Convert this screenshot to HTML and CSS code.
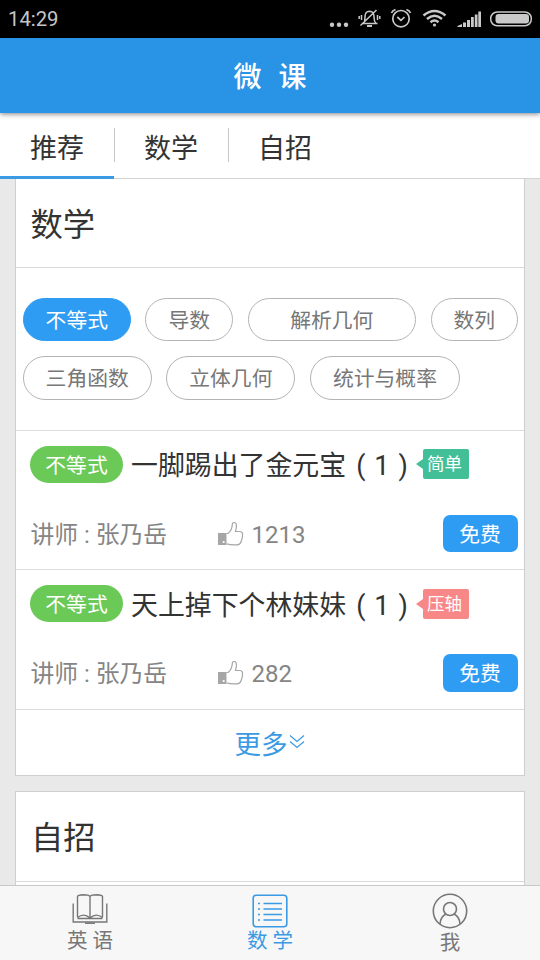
FILE: index.html
```html
<!DOCTYPE html>
<html lang="zh-CN">
<head>
<meta charset="utf-8">
<title>微课</title>
<link rel="stylesheet" href="styles.css">
</head>
<body>
<div class="app">
  <div class="status">
    <span class="time">14:29</span>
    <svg class="status-icons" width="220" height="38" viewBox="0 0 220 38" fill="none" stroke="#c9c9c9">
      <g fill="#c9c9c9" stroke="none"><circle cx="12" cy="24.7" r="2.2"/><circle cx="19" cy="24.7" r="2.2"/><circle cx="26" cy="24.7" r="2.2"/></g>
      <g stroke-width="1.5"><path d="M41.500 23.500H57.500M43.500 23.500Q45 21.500 45 17Q45 11.500 49.500 11.300Q54 11.500 54 17Q54 21.500 56 23.500M40.500 25.500L56.500 10M41.500 15v5M39.200 16v3M57.500 15v5M59.800 16v3"/><path d="M47 26h5" stroke-width="2"/></g>
      <g stroke-width="1.700"><circle cx="81" cy="18.700" r="8.200"/><path d="M77.300 17L81 20.300L84.500 17M71.500 13Q72.500 10.500 75.500 9.500M86.500 9.500Q89.500 10.500 90.500 13" /></g>
      <g stroke-width="2.500"><path d="M103.500 15.500Q114.500 6.500 125.500 15.500M107 19Q114.500 12.500 122 19M110.500 22.300Q114.500 18.800 118.500 22.300"/><circle cx="114.500" cy="25" r="1.600" fill="#c9c9c9" stroke="none"/></g>
      <g fill="#c9c9c9" stroke="none"><path d="M137.500 27v-1l4.500-2v3zM143 22.500h3V27H143zM147 20h3V27H147zM151 17h2.800V27H151zM154.800 14.500h2.700V27h-2.700zM158.300 11.500h2.700V27h-2.700z"/></g>
      <rect x="170.700" y="12" width="40.600" height="13.800" rx="6.500" stroke-width="1.500"/><rect x="175.500" y="14" width="33.500" height="9.600" rx="3" fill="#c9c9c9" stroke="none"/>
    </svg>
  </div>
  <header class="header">微 课</header>
  <nav class="tabs">
    <a class="tab tab-active">推荐</a>
    <a class="tab">数学</a>
    <a class="tab">自招</a>
  </nav>
  <main class="content">
    <section class="card card-first">
      <h2 class="card-title">数学</h2>
      <div class="chips">
        <span class="chip chip-active">不等式</span><span class="chip">导数</span><span class="chip chip-wide">解析几何</span><span class="chip">数列</span>
        <span class="chip">三角函数</span><span class="chip">立体几何</span><span class="chip">统计与概率</span>
      </div>
      <article class="lesson">
        <div class="lesson-top">
          <span class="topic">不等式</span>
          <span class="name">一脚踢出了金元宝<span class="part"><span>(</span><span>1</span><span>)</span></span></span>
          <span class="level level-easy">简单</span>
        </div>
        <div class="lesson-meta">
          <span class="teacher">讲师 : 张乃岳</span>
          <svg class="thumb" width="26" height="26" viewBox="0 0 26 26"><path d="M0 12H8.500V24H0z" fill="#a6a6a6"/><circle cx="5.700" cy="21" r="1.100" fill="#fff"/><path d="M8.500 12.500H10Q14 9.500 14.300 3.500Q14.500 1.300 16.200 1.500Q19 2 18.300 6.500L17.500 10.500H22Q25 11 24.500 14Q24.700 17 23.300 20Q22.500 23.500 19 23.900Q12 24.200 8.500 22.800" fill="none" stroke="#a6a6a6" stroke-width="1.200"/></svg>
          <span class="likes">1213</span>
          <span class="free">免费</span>
        </div>
      </article>
      <article class="lesson">
        <div class="lesson-top">
          <span class="topic">不等式</span>
          <span class="name">天上掉下个林妹妹<span class="part"><span>(</span><span>1</span><span>)</span></span></span>
          <span class="level level-hard">压轴</span>
        </div>
        <div class="lesson-meta">
          <span class="teacher">讲师 : 张乃岳</span>
          <svg class="thumb" width="26" height="26" viewBox="0 0 26 26"><path d="M0 12H8.500V24H0z" fill="#a6a6a6"/><circle cx="5.700" cy="21" r="1.100" fill="#fff"/><path d="M8.500 12.500H10Q14 9.500 14.300 3.500Q14.500 1.300 16.200 1.500Q19 2 18.300 6.500L17.500 10.500H22Q25 11 24.500 14Q24.700 17 23.300 20Q22.500 23.500 19 23.900Q12 24.200 8.500 22.800" fill="none" stroke="#a6a6a6" stroke-width="1.200"/></svg>
          <span class="likes">282</span>
          <span class="free">免费</span>
        </div>
      </article>
      <div class="more">更多<svg width="18" height="18" viewBox="0 0 18 18" fill="none" stroke="#3b9ae4" stroke-width="1.200"><path d="M2 2.500L9 8.500L16 2.500M2 8.500L9 14.500L16 8.500"/></svg></div>
    </section>
    <section class="card">
      <h2 class="card-title card-title-next">自招</h2>
    </section>
  </main>
  <footer class="bottom">
    <a class="item">
      <svg width="36" height="34" viewBox="0 0 36 34" fill="none" stroke="#777" stroke-width="1.400"><path d="M5.500 2.500Q6 1 11 .8Q17 .8 18 2.500Q19 .8 25 .8Q30 1 30.500 2.500V23.500M5.500 2.500V23.500M18 2.500V24M5.500 23.500Q12 18.500 18 24Q24 18.500 30.500 23.500M5.500 24.500H30.500M1.200 9.500V28H34.800V9.500"/><path d="M13 29.200H23" stroke-width="1.500"/></svg>
      <span>英 语</span>
    </a>
    <a class="item item-active">
      <svg width="36" height="34" viewBox="0 0 36 34" fill="none" stroke="#3b9ae4" stroke-width="1.600"><rect x="1.200" y="1.200" width="33.600" height="31.600" rx="3"/><path d="M11.500 9.500H30M11.500 15H30M11.500 20.500H30M11.500 26H30" stroke-width="1.700"/><path d="M6 9.500h2M6 15h2M6 20.500h2M6 26h2"/></svg>
      <span>数 学</span>
    </a>
    <a class="item item-me">
      <svg width="36" height="36" viewBox="0 0 36 36" fill="none" stroke="#777" stroke-width="1.600"><circle cx="18" cy="18" r="16.700"/><circle cx="18" cy="16" r="6.500"/><path d="M8 31Q8.500 23.500 14 21M22 21Q27.500 23.500 28 31"/></svg>
      <span>我</span>
    </a>
  </footer>
</div>
</body>
</html>
```

FILE: styles.css
```css
* { box-sizing: border-box; }
body { margin: 0; font-family: Roboto, "Noto Sans CJK SC", sans-serif; color: #333; }
.app { width: 540px; height: 960px; display: flex; flex-direction: column; overflow: hidden; background: #e9e9e9; }

.status { flex: none; height: 38px; background: #000; display: flex; align-items: center; justify-content: space-between; }
.time { color: #c6c6c6; font-size: 20.300px; line-height: 38px; padding-left: 8px; }
.status-icons { display: block; }

.header { flex: none; height: 75px; background: #2994e6; color: #fff; font-size: 28px; font-weight: 500; line-height: 79px; text-align: center; word-spacing: 10px; position: relative; box-shadow: 0 1px 5px rgba(0, 0, 0, .5); }

.tabs { flex: none; height: 66px; background: #fff; border-bottom: 1px solid #d2d2d2; display: flex; }
.tab { width: 114px; height: 66px; font-size: 27px; line-height: 73px; text-align: center; display: flex; justify-content: center; }
.tab::after { content: ""; width: 1px; height: 34px; margin: 15px -31px 0 30px; background: #c8c8c8; }
.tab:last-child::after { background: none; }
.tab-active { border-bottom: 3px solid #3b9ae4; }

.content { flex: 1; min-height: 0; overflow: hidden; padding: 0 15px; display: flex; flex-direction: column; gap: 15px; }
.card { flex: none; background: #fff; border: 1px solid #cfcfcf; }
.card-first { border-top: 0; height: 597px; }
.card-title { margin: 0; height: 89px; line-height: 93px; padding-left: 14.500px; font-size: 32.300px; font-weight: 400; border-bottom: 1px solid #d9d9d9; }
.card-title-next { height: 90px; line-height: 93px; padding-left: 15px; margin-bottom: 30px; }

.chips { height: 162px; padding: 29.500px 0 0 6.600px; display: flex; flex-wrap: wrap; align-content: flex-start; gap: 15px 14.500px; }
.chip { height: 43.500px; line-height: 44px; padding: 0 22px; border: 1px solid #b4b4b4; border-radius: 22px; font-size: 20.800px; color: #777; white-space: nowrap; }
.chip-active { background: #2f9cf3; border-color: #2f9cf3; color: #fff; }
.chip-wide { width: 168.500px; text-align: center; }

.lesson { height: 139.400px; border-top: 1px solid #dcdcdc; }
.lesson-top { display: flex; align-items: center; padding: 14.500px 0 0 14px; height: 52px; }
.topic { width: 93px; height: 37.500px; line-height: 40px; border-radius: 19px; background: #6ac957; color: #fff; font-size: 20.800px; text-align: center; }
.name { margin-left: 8px; margin-top: 4px; width: 292px; font-size: 26.900px; line-height: 38px; display: flex; white-space: nowrap; }
.part { display: inline-flex; gap: 9px; margin-left: 10px; }
.level { position: relative; width: 46px; height: 30px; line-height: 31px; border-radius: 2px; font-size: 17.500px; color: #fff; padding-left: 4px; }
.level::before { content: ""; position: absolute; left: -7px; top: 10px; border: 5px solid transparent; border-left: 0; border-right: 7px solid currentColor; }
.level-easy { background: #42bf97; }
.level-easy::before { border-right-color: #42bf97; }
.level-hard { background: #f88888; }
.level-hard::before { border-right-color: #f88888; }

.lesson-meta { display: flex; align-items: center; height: 38px; margin-top: 31.500px; padding: 0 6.500px 0 14.500px; color: #858585; font-size: 23.800px; }
.teacher { width: 187px; white-space: pre; line-height: 38px; margin-top: 2px; }
.thumb { flex: none; }
.likes { margin-left: 8px; font-size: 24px; line-height: 38px; margin-top: 3px; }
.free { margin-left: auto; width: 75px; height: 37.500px; line-height: 40px; border-radius: 7px; background: #2f9cf3; color: #fff; font-size: 20.800px; text-align: center; }
.more { height: 66px; border-top: 1px solid #dcdcdc; color: #3b9ae4; font-size: 26.500px; display: flex; align-items: center; justify-content: center; }

.bottom { flex: none; height: 75px; background: #f7f7f7; border-top: 1px solid #c8c8c8; display: flex; }
.item { flex: 1; display: flex; flex-direction: column; align-items: center; padding-top: 8px; color: #777; font-size: 20.500px; }
.item svg { flex: none; }
.item span { line-height: 26px; }
.item-active { color: #3b9ae4; }
.item-me { padding-top: 7px; }
.item-me span { line-height: 28px; }
```
